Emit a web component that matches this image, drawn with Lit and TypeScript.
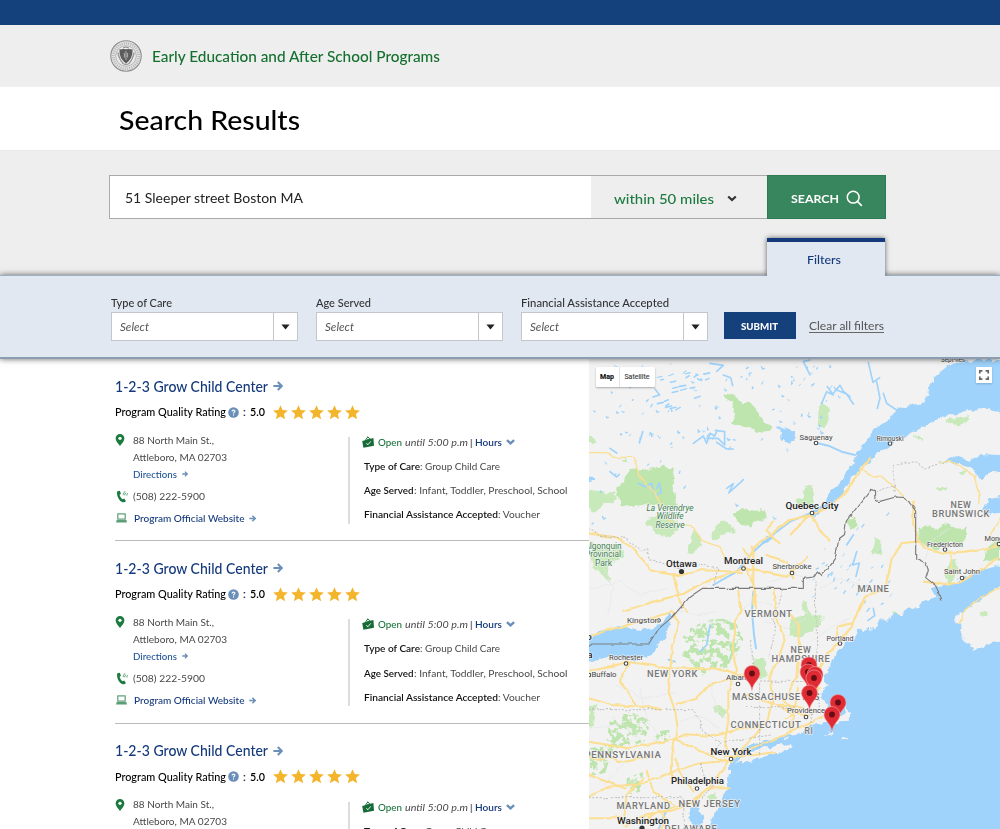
import { LitElement, html, svg, css } from "lit";
import { customElement, property } from "lit/decorators.js";

/* Text whose glyph width is adjusted so that it fills a given measure. */
@customElement("fitted-text")
class FittedText extends LitElement {
  @property({ type: Number }) w = 0;
  static styles = css`
    :host { display: inline-block; white-space: pre; }
    span { display: inline-block; transform-origin: 0 50%; }
  `;
  firstUpdated() {
    const inner = this.renderRoot.querySelector("span") as HTMLElement;
    const natural = inner.getBoundingClientRect().width;
    if (!this.w || !natural) return;
    this.style.width = this.w + "px";
    inner.style.transform = `scaleX(${this.w / natural})`;
  }
  render() {
    return html`<span><slot></slot></span>`;
  }
}

const t = (text: string, w: number, cls = "") => html`<fitted-text class=${cls} w=${w}>${text}</fitted-text>`;

const arrow = (size: number) => html`<svg class="arrow" width=${size} height=${size} viewBox="0 0 10 10">
  <path d="M0.4 5H8.6M4.8 1L8.8 5L4.8 9" fill="none" stroke="#6a8fb8" stroke-width="2.1" /></svg>`;

@customElement("program-map")
class ProgramMap extends LitElement {
  static styles = css`
    :host { display: block; position: relative; overflow: hidden; background: #f2f2f2; font-family: Roboto, sans-serif; }
    .canvas { display: block; width: 411px; height: 470px; }
    .toggle { position: absolute; left: 7px; top: 8px; height: 20px; display: flex; background: #fff; border-radius: 1px; box-shadow: 0 1px 2px rgba(0,0,0,.3); font-size: 7px; line-height: 20px; color: #444; }
    .toggle span { width: 35px; text-align: center; -webkit-text-stroke: .15px #444; }
    .toggle .on { width: 23px; color: #000; font-weight: 700; border-right: 1px solid #e6e6e6; }
    .full { position: absolute; right: 8px; top: 8px; width: 16px; height: 16px; background: #fff; box-shadow: 0 1px 2px rgba(0,0,0,.2); }
    .park { fill: #bde5ad; }
    .lite { fill: #c8e9ba; }
    .water { fill: #9fd3fb; }
    .lake { fill: none; stroke: #9fd3fb; stroke-linecap: round; stroke-linejoin: round; }
    .road { fill: none; stroke: #fcdf92; stroke-linejoin: round; stroke-linecap: round; }
    .minor { fill: none; stroke: #e6e6e6; stroke-width: 2; }
    .border { fill: none; stroke: #7c7c7c; stroke-width: 3.5; stroke-linejoin: round; }
    .state { fill: none; stroke: #bdbdbd; stroke-width: 3; stroke-dasharray: 6 5; }
    text { text-anchor: middle; paint-order: stroke; stroke: #f5f5f5; stroke-width: 1.2px; stroke-linejoin: round; }
    .city { font-size: 9.8px; fill: #222; font-weight: 500; }
    .town { font-size: 8px; fill: #444; }
    .region { font-size: 9px; fill: #777; font-weight: 500; letter-spacing: .6px; }
    .green { font-size: 8.3px; fill: #3d7f50; font-style: italic; }
    .greenr { font-size: 8.3px; fill: #3d7f50; }
  `;

  private scatter() {
    const out = [];
    let s = 7;
    const r = () => (s = (s * 16807) % 2147483647) / 2147483647;
    for (let i = 0; i < 130; i++) {
      const x = -590 + r() * 740, y = 25 + r() * (i % 3 ? 230 : 520);
      const l = 2 + r() * 7, k = r() * 10;
      if (x > -30 && x > 200 - (y - 60) * 0.6) continue;
      if (x > -205 && x < -60 && y > 105 && y < 245) continue;
      out.push(svg`<path d="M${x} ${y}l${k - 6} ${l}l${k / 2} ${-l / 3}" stroke-width=${2 + r() * 2.5} />`);
    }
    for (let i = 0; i < 22; i++) {
      out.push(svg`<path d="M${-400 + r() * 170} ${55 + r() * 110}l${8 + r() * 10} ${-8 + r() * 6}" stroke-width=${3 + r() * 2.5} />`);
    }
    for (let i = 0; i < 46; i++) {
      const x = 65 + r() * 250, y = 470 + r() * 300;
      if (x < 170 && y < 560) continue;
      out.push(svg`<path d="M${x} ${y}l${-3 - r() * 4} ${3 + r() * 7}" stroke-width=${2 + r() * 2.5} />`);
    }
    return out;
  }

  private pin(x: number, y: number) {
    return svg`<g transform="translate(${x} ${y})">
      <path d="M0 17C-.8 9-8 6-8 0A8 8 0 0 1 8 0C8 6 .8 9 0 17Z" fill="#e02b34" stroke="#f4a5a8" stroke-width=".6" />
      <circle r="2.9" fill="#640d12" /></g>`;
  }

  render() {
    const dot = (x: number, y: number) => svg`<circle cx=${x} cy=${y} r="1.8" fill="#fff" stroke="#444" stroke-width="1.1" />`;
    const label = (c: string, x: number, y: number, s: string, w?: number) =>
      w ? svg`<text class=${c} x=${x} y=${y} textLength=${w} lengthAdjust="spacingAndGlyphs">${s}</text>` : svg`<text class=${c} x=${x} y=${y}>${s}</text>`;
    return html`
      <svg class="canvas" viewBox="589 359 411 470">
        <defs>
          <filter id="rough" filterUnits="userSpaceOnUse" x="-640" y="-20" width="1320" height="1480">
            <feTurbulence type="fractalNoise" baseFrequency="0.045" numOctaves="3" seed="4" />
            <feDisplacementMap in="SourceGraphic" scale="22" xChannelSelector="R" yChannelSelector="G" />
          </filter>
          <filter id="patchy" filterUnits="userSpaceOnUse" x="-640" y="-20" width="1320" height="1480">
            <feTurbulence type="fractalNoise" baseFrequency="0.05" numOctaves="3" seed="9" />
            <feColorMatrix values="0 0 0 0 0  0 0 0 0 0  0 0 0 0 0  14 0 0 0 -6.6" />
            <feComposite in="SourceGraphic" operator="in" />
          </filter>
          <filter id="slight" filterUnits="userSpaceOnUse" x="-640" y="-20" width="1320" height="1480">
            <feTurbulence type="fractalNoise" baseFrequency="0.03" numOctaves="2" seed="2" />
            <feDisplacementMap in="SourceGraphic" scale="12" xChannelSelector="R" yChannelSelector="G" />
          </filter>
        </defs>
        <g transform="translate(790 355) scale(.33333)">
          <g filter="url(#rough)">
            <path class="park" d="M-195 118l18-2 20 14 18 18 16-8 16 12 6 24 16 14 10 14 24 14-20 12-24-2-36-14-18-1-24-12 12-28-14-32-20-12z" />
            <path class="park" d="M-485 345l90-6 12-12 18 12 14 2 4 30-10 14 12 24 8 42-30 0-138 0-4-22-16-8 6-28 20-14 10-18z" />
            <path class="lite" d="M-604 410l30-6 28 16 14-8 14 16-6 18-30-4-28 28-22-8zM-604 244h22v20h-22zM-506 312l14-4 4 10-12 4zM-428 492l30-10 60 16 4 30-34 16-36-8-10-18-20-12zM-600 560l60 30 30-20 16 40-60 20 20 60-60-60zM-290 530l18 8 6 30-24 30-20-6 12-36zM-230 520l26-22 28 12 8 20-22 6-28 20-20-4z" />
            <path class="park" d="M-170 475l30-12 36 4 36-2-6 26-26 8-22 16-34-12z" />
            <path class="lite" d="M85 155l14-10 14 10 7 35-12 25-17 3-10-30zM45 395l22-5 8 25-6 40-30 0-22 8 4-26 20-8zM470 198l30-12 20 4 14-10v18l-30 10-40-2zM370 238l30 14-6 6-26-14zM505 350l18-8 10 8-18 12zM440 395l34 4-2 10-30-4z" />
            <path class="park" d="M385 520l30-10 25 10 20-14 40 14 30-5-12 60-30-14-50 24-30-18-28-4zM590 575l40-25v60l-48 12zM175 495l20-10 12 28-30 12z" />
            <path class="lite" d="M252 552h22v46h-26zM478 610l18 0 10 40-30 40-12-20zM40 733l14 40-6 10-12-20zM0 800l30-18 50-6 22 14-30 34-54 26-22-10zM310 772l18 6-4 10-14-4z" />
            <path class="lite" d="M-110 910l36-2 6 50-20 14-26-14zM-230 1060l20-8 18 14-14 22zM-604 1050l22 0-6 60-16 10zM-480 1280l20-10-10 40zM-250 1320l26-8 6 18-20 10z" />
            <path class="water" d="M60 475l50-35 15-35 25-20 15-35 25-25 5-25 45-55 10-20 40-25 30-35 30-13 50-7 15-25 3-30 22-30 30-25 30-15 60-5h120V178L590 162l-50 2-60 16-60 25-70 35-50 30-40 25-20 27-25 18-45 50-20 35-40 35-43 25z" />
            <path class="water" d="M440 325l40-15 20-10 40 18 30-18 80 4v50l-50-4-30 24-20-28-40-20-34-4zM650 420l-50 8-22 34 22 20 50-10z" />
            <path class="water" d="M650 625L560 650 510 672 480 690 450 692 425 700 440 725 400 740 370 765 352 760 330 785 312 775 290 800 270 790 250 830 238 815 220 830 205 820 195 850 160 865 140 895 125 925 110 955 97 985 115 990 88 1010 95 1030 112 1050 118 1078 150 1082 168 1072 160 1048 178 1075 176 1100 100 1105 60 1110 40 1130 0 1145-55 1155-115 1165-150 1190-180 1225-180 1250-190 1305-215 1355-240 1405-250 1445H650z" />
            <path d="M650 680l-50 32-50 38-40 25-13 25 15 20 3 25 35 40 40-15 60-20zM-165 1222l40-32 60-14 70-10 10 10-75 22-60 22zM105 1142l22-14 4 10zM155 1146l18 2 0 5-18-1z" fill="#f2f2f2" />
            <path class="lite" d="M570 772a12 12 0 1 1 1 10z" />
            <path class="water" d="M-620 858l46-26 70-18 60 12 36-8 30-20 14-24 12 10-14 34-10 40-26 12-10 30-60 14-70-8-78 14zM-32 225l18-5 30 14 0 22-20 10-24-20zM-604 365h22v8l-22 6zM-90 562l34-22 10 4-30 22zM-300 1355l30 6 10 40-18 28-22-6 4-34z" />
          </g>
          <g filter="url(#patchy)">
            <path class="park" d="M-300 820l50-25 50-4 40 16 20 46-20 50-34 40-40-4-30 26-26-36-36-30 20-30-20-24zM-540 1090l60-20 60 26-10 60-60 24-60-24zM-410 1130l50-6-2 34-44 4zM-600 1180l90-20-20 50-70 30zM-604 1240l60-20-10 34-50 10zM-490 1270l50-20-10 60-40 10z" />
          </g>
          <path class="lake" stroke-width="6" d="M60 475L0 500-60 545-110 590-160 650-230 690M195 300l-40-10-40-18-35-8M-110 710l-4 60 6 70 6 40M-120 1180l60-20 60-20M-395 1425l20-50 14-18M-18 225l-20-8" />
          <path class="lake" stroke-width="5" d="M95 145l15-35 20 10-18-25M130 115l20-24 10 18 20 16M140 105l30 12 20 30M60 60L40 20 60 15M235 22l14 60 20-14M260 80l10 50-8 30M320 165l-30-20-10-30M-290 265l30-22 10 22 10-30 14 8 6-14M-250 250l34 0 20 20 0-40-28-4M-220 262l30 20 20 0M-442 230l-10 34M-405 102l14 18-20 6M-190 400l20-14-14 28 34-30 10-10M-455 385l20 10 20-10 4 26M-400 400l8-16 6 28-16 8M-540 350l20 16 8-8M-240 25l40 6-20 18M-200 60l22 8 6 24M-540 280l20 14M200 590l-12 40 20-6-10 40M190 540l-20 30M250 760l4 22-20 14M-240 810l-10 60-20 20M-345 920l-20-6" />
          <g class="lake">${this.scatter()}</g>
          <g filter="url(#slight)">
            <path class="minor" d="M-600 700l90-20 60 40 80-20M-560 640l30 60-20 80M-520 990l80 40 100-20M-600 1120l100-10 60 50M-450 1000l20 100 60 60M-330 1100l60-20 60 40M-240 980l20 80 40 40M-560 1290l60-60 20-60M-80 800l70 20 60-30M60 860l60-40 60-30M90 700l60-30 60 20M400 640l20-80 60-40M-60 680l80-20 60 20M-160 780l50-40 60 10M-360 760l80 20 60-10" />
            <path class="road" stroke-width="4" stroke="#f9d284" d="M-604 293l58 0 16 14 62 0 14 50 50 60 20 50 30 40 60 4 30 46 50 18 30 50M210 345l30 16 36 4 44 40 40 35M450 325l30-8 40 22 32 24 16 60-2 25M630 490l-30 50M630 700l-60 30-45 35-18 40" />
            <path class="road" stroke-width="6.5" d="M240 310l-30 35-30 50-40 45-60 35-80 20-60 46-50 36-30 60-40 20-70 20-70 40-80 20-100 30M60 475l10 20 45 65M60 480L0 540M-140 640l130 25 60-60M-52 500l-20 24 40 40M-140 580l30 50 0 120M-118 575l14 50M-130 640l24 60 4 60M-604 535l80 12 50 30 60 70 80 16 60-18 130 6M-350 660l20 80 20 30M370 440l0 70 15 45 20 25 60 14 60-4 90-14 50-34M385 560l-50 4-30 50-20 90-60 22-30 60-10 30-70 80-40 70-20 40M185 805l-40 10-5 30M405 680l60 10 50-10 110-70M480 590l6 70M-70 600l60 20 20 50" />
            <path class="road" stroke-width="6" d="M-604 845l60-20 110-30 80-24 20 30-20 70-4 60-6 80 20 60 6 40-16 90 0 60 20 20M-604 950l120-30 120 20 140 0 60 18 50 10M-155 708l10 60-20 30 0 40-10 40 16 70-26 60 0 90-10 60 6 30M-340 1050l60-20 40-40 80-20M-604 1160l120 20 130-26 40-16 70 4 90-18 60-8M-340 1154l60 30 80 34M-604 1325l60-30 110-10 70-30 90-30 100-8M-604 1205l30 10 40-8 20 14 100-20M-604 1030l70 20 100 6 44 8M-480 925l-30 50 30 50 20 30M-50 705l10 90 24 60-20 60-26 50 10 70-16 60-40 50-60 60M0 775l24 30 6 60-8 100-40 70 30 30M-130 1020l90 30 80 8M-40 1050l40 20 60 10M-16 1090l40-20M-130 1190l60-28 60-26 60-26 50-26M0 1130l16-80 8-50M70 970l20 30-20 30M-180 1215l-50 70-60 60-60 20-100 20-40 30M-290 1310l-40-60-14-40M-604 1390l40 0 60 0 60 10 50-30 100-30 50-40 60 0M-440 1270l-50 50-10 90M-430 1250l20 60 60 40M-604 1260l80 30 30 10M-400 1360l30 30-20 40M-195 1205l70-2 80-12" />
            <path class="border" d="M-604 875l10-8 172 0 28-46 40-34 54-62 38-25H40l0-30 30-4 12-18 14 14 18-20 22-32 10-60 18-14 5-38 72-92 12 4 2 24 12 6 50-14 30 2 30 40V610l30 14 8 20-8 24 30 24 12 30 4 12" />
            <path class="state" d="M-604 520l30 20 80 10 50 40 14-10 4 30 50 20 60 10M-230 690l14-50-60-14M312 410v-78l38-8 30 0 22 16 40-12M258 410l60-20M75 680l10 380M70 1065l-12 60M-115 855l4 120 20 10 0 220M-90 978l180 2M-134 1057l150 2M-604 1064l312 0 24 30 0 30 60 40-20 30M-195 1160l140-20M-604 1328l284 0M-270 1225l14 40 30 20-40 50M-320 1330l4 95M-20 700l-14 50-20 30 10 50-20 80" />
          </g>
        </g>
        ${dot(816, 443)}${dot(890, 443.5)}${dot(812, 513)}${dot(743.5, 568.5)}${dot(792, 573)}${dot(945, 549.5)}${dot(962, 578)}${dot(840, 643.5)}${dot(658.5, 620.5)}${dot(626, 663.5)}${dot(738, 684)}${dot(731, 759)}${dot(697, 788.5)}${dot(806, 717)}${dot(589, 675)}${dot(999, 544)}
        <circle cx="681.5" cy="571.5" r="2.6" fill="#333" /><circle cx="642" cy="828" r="2.6" fill="#333" />
        ${label("city", 681.5, 567, "Ottawa", 31)}${label("city", 743.5, 564, "Montreal", 39)}${label("city", 812, 509, "Quebec City", 53)}
        ${label("city", 731, 755, "New York", 41)}${label("city", 697.5, 784, "Philadelphia", 53)}${label("city", 643, 823.5, "Washington", 52)}
        ${label("town", 816, 440, "Saguenay", 33)}${label("town", 890, 441, "Rimouski", 27)}${label("town", 792, 569, "Sherbrooke", 39)}${label("town", 945, 547, "Fredericton", 36)}${label("town", 962, 574, "Saint John", 36)}${label("town", 840, 640.5, "Portland", 27)}${label("town", 643, 623, "Kingston", 32)}${label("town", 626, 660, "Rochester", 34)}${label("town", 604, 677, "Buffalo", 25)}${label("town", 738, 680, "Albany", 24)}${label("town", 806, 713, "Providence", 38)}${label("town", 999, 541, "Moncton", 29)}${label("town", 953, 362, "Sept-Îles", 24)}
        ${label("city", 589, 640, "o")}${label("city", 590, 658, "a")}
        ${label("region", 873.5, 592, "MAINE", 32)}${label("region", 768.5, 617, "VERMONT", 48)}${label("region", 801, 653, "NEW", 21)}${label("region", 801, 662, "HAMPSHIRE", 59)}${label("region", 672.5, 677, "NEW YORK", 51)}${label("region", 776, 699.5, "MASSACHUSETTS", 88)}${label("region", 766, 728, "CONNECTICUT", 71)}${label("region", 809, 733.5, "RI", 9)}${label("region", 623, 757.5, "PENNSYLVANIA", 77)}${label("region", 643.5, 808.5, "MARYLAND", 54)}${label("region", 709.5, 807, "NEW JERSEY", 62)}${label("region", 691, 832, "DELAWARE", 53)}${label("region", 961, 508, "NEW", 21)}${label("region", 961, 517, "BRUNSWICK", 58)}
        ${label("green", 670, 511, "La Verendrye", 47)}${label("green", 670, 519, "Wildlife", 27)}${label("green", 670, 527.5, "Reserve", 29)}
        ${label("greenr", 603, 549, "Algonquin", 37)}${label("greenr", 603, 557, "Provincial", 36)}${label("greenr", 603.5, 565.5, "Park", 17)}
        ${this.pin(752, 673.5)}${this.pin(809, 665)}${this.pin(808, 672)}${this.pin(815, 674.5)}${this.pin(814, 678)}${this.pin(809.5, 693)}${this.pin(838, 702.5)}${this.pin(832, 714.5)}
      </svg>
      <div class="toggle"><span class="on">Map</span><span>Satellite</span></div>
      <svg class="full" viewBox="0 0 16 16"><path d="M3.8 6.4V3.8H6.4M9.6 3.8H12.2V6.4M12.2 9.6V12.2H9.6M6.4 12.2H3.8V9.6" fill="none" stroke="#666" stroke-width="1.7" /></svg>
    `;
  }
}

@customElement("program-card")
class ProgramCard extends LitElement {
  static styles = css`
    :host { display: block; box-sizing: border-box; height: 182.3px; padding-top: 17px; color: #484848; font-size: 10.1px; border-bottom: 1.7px solid #bcbcbc; }
    svg { display: block; flex: none; }
    .title { display: flex; align-items: center; gap: 5px; height: 20px; font-size: 14.3px; font-weight: 500; color: #14397c; }
    .rating { display: flex; align-items: center; height: 20px; margin-top: 6px; color: #000; font-size: 10.6px; font-weight: 500; }
    .help { margin: 0 4px 0 2px; }
    .score { margin: 0 8px 0 4px; font-weight: 600; }
    .stars { display: flex; gap: 3.2px; }
    .body { display: flex; margin-top: 8px; }
    .left { width: 233px; padding-top: 1.5px; }
    .row { display: flex; }
    .icon { width: 17.5px; padding-top: 2.5px; }
    .addr { line-height: 17px; }
    .line { display: flex; align-items: center; gap: 5px; height: 17px; }
    .phone { align-items: center; height: 18px; margin-top: 4.5px; }
    .web { align-items: center; height: 18px; margin-top: 4px; color: #14397c; font-weight: 500; }
    .web .icon, .phone .icon { padding: 0 0 0 1px; width: 16.5px; }
    .web .line { padding-left: 1px; }
    .link { color: #1f5296; font-weight: 500; }
    .rule { width: 1.5px; height: 87px; margin-top: 7px; background: #dcdcdc; }
    .right { padding-left: 12px; }
    .fact { display: flex; align-items: center; height: 24.1px; padding-left: 2.5px; }
    .open { padding-left: 0; }
    .open svg { margin-right: 4.5px; }
    .g { color: #19733a; font-weight: 500; }
    .b { color: #111; font-weight: 600; }
    .h { color: #14397c; font-weight: 600; }
    .i { font-style: italic; margin: 0 2px 0 3px; }
    .open .chev { margin-left: 4px; }
    .bar { margin-right: 2px; color: #111; }
  `;
  render() {
    return html`
      <div class="title">${t("1-2-3 Grow Child Center", 153)}${arrow(10)}</div>
      <div class="rating">
        ${t("Program Quality Rating", 111)}
        <svg class="help" width="11" height="11" viewBox="0 0 11 11"><circle cx="5.5" cy="5.5" r="5.3" fill="#6a8fb8" /><path d="M4 4.4C4.1 2.6 7 2.7 6.9 4.3C6.8 5.3 5.5 5.3 5.5 6.4M5.5 7.3V8.4" fill="none" stroke="#fff" stroke-width="1.1" /></svg>
        <span>:</span><span class="score">${t("5.0", 15)}</span>
        <div class="stars">${[0, 1, 2, 3, 4].map(() => html`<svg width="15" height="15" viewBox="0 0 15 15"><path d="M7.5 .2L9.6 5.1L14.9 5.5L10.9 9L12.1 14.3L7.5 11.5L2.9 14.3L4.1 9L.1 5.5L5.4 5.1Z" fill="#f2b52c" /></svg>`)}</div>
      </div>
      <div class="body">
        <div class="left">
          <div class="row">
            <div class="icon"><svg width="10" height="12" viewBox="0 0 10 12"><path d="M5 12C3 9 .6 7 .6 4.4A4.4 4.4 0 0 1 9.4 4.4C9.4 7 7 9 5 12Z" fill="#1b7a40" /><circle cx="5" cy="4.3" r="1.6" fill="#fff" /></svg></div>
            <div class="addr">
              <div class="line">${t("88 North Main St.,", 81)}</div>
              <div class="line">${t("Attleboro, MA 02703", 94)}</div>
              <div class="line link">${t("Directions", 44)}${arrow(6)}</div>
            </div>
          </div>
          <div class="row phone">
            <div class="icon"><svg width="13" height="13" viewBox="0 0 13 13"><path d="M1.3 1.2L3.8 .7L5 3.8L3.6 4.8C4.2 6.9 5.2 8.3 6.6 9.3L8.2 8.6L9.9 11.1C8.9 12.4 7.2 12.8 5.6 11.8C2.3 9.7 .3 4.6 1.3 1.2Z" fill="#1b7a40" /><path d="M7 5.2C7.3 3.8 7.8 2.8 9 1.2M8.7 5.3C8.7 4.3 9.1 3.6 9.8 2.7M10.9 5.6C10.7 4.6 11.1 3.8 11.6 3.2" fill="none" stroke="#5c9f76" stroke-width="1" /></svg></div>
            <div class="line">${t("(508) 222-5900", 72)}</div>
          </div>
          <div class="row web">
            <div class="icon"><svg width="11" height="10" viewBox="0 0 11 10"><rect x="1.8" y=".9" width="7.4" height="5.2" fill="#fff" stroke="#5c9f76" stroke-width="1.2" /><path d="M.7 7H10.3L11 9.6H0Z" fill="#5c9f76" /></svg></div>
            <div class="line">${t("Program Official Website", 110.5)}${arrow(7)}</div>
          </div>
        </div>
        <div class="rule"></div>
        <div class="right">
          <div class="fact open">
            <svg width="12" height="12" viewBox="0 0 12 12"><path d="M.2 5L3 4.2L5.7 .3L8.2 2.7L11.4 2L12 9.8L1.4 11.8Z" fill="#176b37" /><path d="M4.7 3.7L5.9 2L7 3.1M4.3 7.4L6 8.7L8.7 5.4" fill="none" stroke="#fff" stroke-width=".9" /></svg>
            ${t("Open", 24, "g")}${t("until 5:00 p.m", 63, "i")}<span class="bar">|</span>${t("Hours", 27, "h")}
            <svg class="chev" width="9" height="6" viewBox="0 0 9 6"><path d="M.9 1.1L4.5 4.3L8.1 1.1" fill="none" stroke="#6a8fb8" stroke-width="2.4" /></svg>
          </div>
          <div class="fact">${t("Type of Care", 56, "b")}${t(": Group Child Care", 80)}</div>
          <div class="fact">${t("Age Served", 49.5, "b")}${t(": Infant, Toddler, Preschool, School", 153.5)}</div>
          <div class="fact">${t("Financial Assistance Accepted", 134, "b")}${t(": Voucher", 42)}</div>
        </div>
      </div>
    `;
  }
}

@customElement("app-root")
class AppRoot extends LitElement {
  static styles = css`
    :host { display: flex; flex-direction: column; width: 1000px; height: 829px; overflow: hidden; background: #fff; font-family: Lato, "Open Sans", sans-serif; color: #000; }
    .top { flex: none; height: 25px; background: #14417b; }
    .brand { flex: none; height: 62px; background: #eee; display: flex; align-items: center; padding-left: 110px; gap: 10px; color: #14702f; font-size: 14.6px; font-weight: 500; }
    .heading { flex: none; height: 63px; box-sizing: border-box; display: flex; align-items: center; padding: 2px 0 0 119px; font-size: 26.5px; font-weight: 500; margin: 0; }
    .search { flex: none; box-sizing: border-box; height: 125px; background: #eee; padding: 24px 114px 0 109px; display: flex; flex-direction: column; align-items: flex-end; justify-content: space-between; border-top: 1px solid #e8e8e8; }
    .bar { align-self: stretch; display: flex; height: 44px; }
    .query { box-sizing: border-box; width: 481.5px; background: #fff; border: 1px solid #aaa; border-right: 0; display: flex; align-items: center; padding: 2px 0 0 15px; font-size: 13px; color: #222; }
    .radius { box-sizing: border-box; flex: 1; border: solid #aaa; border-width: 1px 0; display: flex; align-items: center; padding: 3px 0 0 23px; gap: 13px; color: #1b7a40; font-size: 13.6px; font-weight: 500; }
    .go { box-sizing: border-box; width: 119px; background: #38865d; border: 1px solid #2c7c51; display: flex; align-items: center; justify-content: center; gap: 7px; color: #fff; font-size: 12.2px; font-weight: 700; padding: 2px 0 0 1px; }
    .tab { position: relative; z-index: 2; box-sizing: border-box; width: 118px; height: 38px; margin-bottom: -1px; margin-right: 1px; background: #e1e8f1; border-top: 4px solid #14397c; box-shadow: 0 0 5px rgba(0,0,0,.6); clip-path: inset(-8px -8px 0 -8px); display: flex; align-items: center; justify-content: center; padding-right: 4px; color: #14397c; font-size: 11.4px; font-weight: 500; }
    .filters { position: relative; z-index: 1; flex: none; box-sizing: border-box; height: 83.5px; background: #e1e8f1; border-top: 1px solid #9dafc5; border-bottom: 2px solid #8c9db2; display: flex; align-items: flex-start; padding: 20px 0 0 110.5px; box-shadow: 0 0 6px rgba(0,0,0,.6); font-size: 10.8px; font-weight: 500; color: #333; }
    .field { display: flex; flex-direction: column; gap: 2px; margin-right: 17.5px; }
    .field:nth-of-type(3) { margin-right: 15.5px; }
    .label { height: 14px; line-height: 13px; }
    .select { box-sizing: border-box; width: 187.5px; height: 29px; background: #fff; border: 1px solid #c3c7cc; display: flex; align-items: center; justify-content: space-between; padding-left: 8px; font-style: italic; font-weight: 400; font-size: 11px; color: #555; }
    .caret { box-sizing: border-box; width: 24px; height: 100%; border-left: 1px solid #c3c7cc; display: flex; align-items: center; justify-content: center; }
    .submit { width: 72.5px; height: 27px; margin-top: 16px; background: #14417b; color: #fff; font-weight: 900; font-size: 10px; display: flex; align-items: center; justify-content: center; }
    .clear { margin: 22px 0 0 12.5px; font-weight: 400; font-size: 11.8px; color: #555; }
    .ul { line-height: 14px; border-bottom: 1px solid #666; height: 13px; }
    .main { display: flex; flex: 1; min-height: 0; }
    .list { width: 473.5px; padding-left: 115px; padding-top: .5px; overflow: hidden; }
    .map { flex: 1; height: 470px; margin-top: .5px; }
  `;
  private field(label: string, w: number) {
    return html`<div class="field"><div class="label">${t(label, w)}</div>
      <div class="select">${t("Select", 29)}<div class="caret"><svg width="9" height="6" viewBox="0 0 9 6"><path d="M.4 .4H8.6L4.5 5.6Z" fill="#222" /></svg></div></div></div>`;
  }
  render() {
    return html`
      <div class="top"></div>
      <div class="brand">
        <svg width="32" height="32" viewBox="0 0 32 32">
          <circle cx="16" cy="16" r="15.2" fill="#e6e6e6" stroke="#8c8c8c" stroke-width="1.1" />
          <circle cx="16" cy="16" r="12.7" fill="none" stroke="#bdbdbd" stroke-width="2.6" stroke-dasharray="1.3 .9" />
          <circle cx="16" cy="16" r="10.3" fill="#ececec" stroke="#a5a5a5" stroke-width=".8" />
          <path d="M8 12.5Q8.7 18.5 13 23.5Q16 25.5 19 23.5Q23.3 18.5 24 12.5" fill="none" stroke="#999" stroke-width="1.5" />
          <path d="M9.4 9.6Q12.5 8.6 16 9.3Q19.5 8.6 22.6 9.6Q23 18.8 16 23.4Q9 18.8 9.4 9.6Z" fill="#5c5c5c" />
          <path d="M16 11V20M14.4 13V17.5M17.6 13V17.5" stroke="#bbb" stroke-width=".9" />
          <path d="M13 8L16 7L19 8" fill="none" stroke="#888" />
        </svg>
        ${t("Early Education and After School Programs", 288)}
      </div>
      <h1 class="heading">${t("Search Results", 181)}</h1>
      <div class="search">
        <div class="bar">
          <div class="query">${t("51 Sleeper street Boston MA", 178)}</div>
          <div class="radius">${t("within 50 miles", 100)}<svg width="10" height="7" viewBox="0 0 10 7"><path d="M1.2 1.5L5 5L8.8 1.5" fill="none" stroke="#333" stroke-width="2.3" /></svg></div>
          <div class="go">${t("SEARCH", 48)}<svg width="17" height="17" viewBox="0 0 17 17"><circle cx="7.2" cy="7.2" r="5.9" fill="none" stroke="#fff" stroke-width="1.5" /><path d="M11.5 11.5L15.8 15.8" stroke="#fff" stroke-width="1.7" /></svg></div>
        </div>
        <div class="tab">${t("Filters", 34)}</div>
      </div>
      <div class="filters">
        ${this.field("Type of Care", 61)}${this.field("Age Served", 55)}${this.field("Financial Assistance Accepted", 148)}
        <div class="submit">${t("SUBMIT", 37)}</div>
        <div class="clear">${t("Clear all filters", 75, "ul")}</div>
      </div>
      <div class="main">
        <div class="list"><program-card></program-card><program-card></program-card><program-card></program-card></div>
        <program-map class="map"></program-map>
      </div>
    `;
  }
}
